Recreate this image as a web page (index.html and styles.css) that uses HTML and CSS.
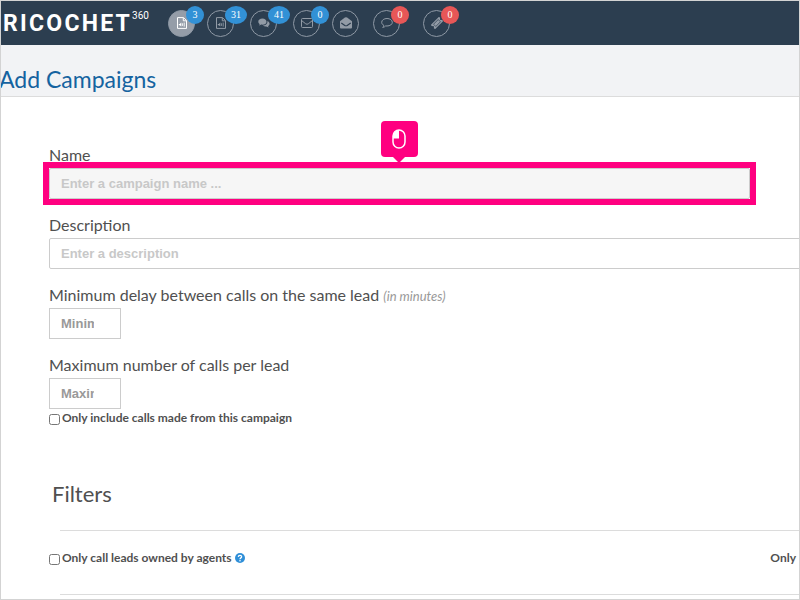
FILE: index.html
```html
<!DOCTYPE html>
<html lang="en">
<head>
  <meta charset="UTF-8" />
  <meta name="viewport" content="width=device-width, initial-scale=1.0" />
  <title>Add Campaigns</title>
  <link rel="stylesheet" href="styles.css">
</head>
<body>
  <div class="page">
    <header class="topbar">
      <div class="logo">
        <span>R</span><span>I</span><span>C</span><span>O</span><span>C</span><span>H</span><span>E</span><span>T</span><sup>360</sup>
      </div>
      <nav class="notifications">
        <button type="button" class="notice" aria-label="Voicemails">
          <span class="circle active">
            <svg width="12" height="12" viewBox="0 0 12 12" fill="none" stroke="currentColor"><path d="M1.5 .6h6l3 3v7.8h-9zM7.3.8v3h3"/><path d="M2.8 7.1h1L5.3 5.6v4L3.8 8.3h-1z" fill="currentColor" stroke="none"/><path d="M6.4 6.3v2.6M8.2 5.6v4" stroke-width=".9"/></svg>
          </span>
          <span class="badge">3</span>
        </button>
        <button type="button" class="notice" aria-label="Recordings">
          <span class="circle">
            <svg width="12" height="12" viewBox="0 0 12 12" fill="none" stroke="currentColor"><path d="M1.5 .6h6l3 3v7.8h-9zM7.3.8v3h3"/><path d="M2.8 7.1h1L5.3 5.6v4L3.8 8.3h-1z" fill="currentColor" stroke="none"/><path d="M6.4 6.3v2.6M8.2 5.6v4" stroke-width=".9"/></svg>
          </span>
          <span class="badge">31</span>
        </button>
        <button type="button" class="notice" aria-label="Messages">
          <span class="circle">
            <svg width="12" height="12" viewBox="0 0 12 12" fill="currentColor"><path d="M4.4 1.6C2 1.6.3 2.9.3 4.7c0 1 .6 1.8 1.5 2.4-.2.6-.5.9-.8 1.3.9-.1 1.6-.4 2.2-.8.4.1.8.1 1.2.1 2.4 0 4.1-1.3 4.1-3S6.8 1.6 4.4 1.6z"/><path d="M9.3 4c.8 2.3-1.5 4.5-4.4 4.5.8.8 2 1.2 3.3 1.1.8.5 1.6.8 2.6.8-.4-.4-.7-.8-.8-1.3 2.2-1.2 2.2-4-.7-5.1z"/></svg>
          </span>
          <span class="badge">41</span>
        </button>
        <button type="button" class="notice" aria-label="Emails">
          <span class="circle">
            <svg width="12" height="12" viewBox="0 0 12 12" fill="none" stroke="currentColor"><rect x=".5" y="1.5" width="11" height="9" rx="1"/><path d="M.7 3.6l4 3.2q1.3.9 2.6 0l4-3.2"/></svg>
          </span>
          <span class="badge">0</span>
        </button>
        <button type="button" class="notice" aria-label="Open emails">
          <span class="circle">
            <svg width="12" height="12" viewBox="0 0 12 12"><path d="M0 4.2L4.9.6q1.1-.8 2.2 0L12 4.2V10.5q0 1-1 1H1q-1 0-1-1z" fill="currentColor"/><path d="M1.3 5.9L4.8 8.4q1.2.7 2.4 0l3.5-2.5" fill="none" stroke="#2c3e50" stroke-width="1.2"/></svg>
          </span>
        </button>
        <button type="button" class="notice spaced" aria-label="Chats">
          <span class="circle">
            <svg width="12" height="12" viewBox="0 0 12 12" fill="none" stroke="currentColor"><path d="M6 1.5C3 1.5.7 3.1.7 5.3c0 1.3.8 2.4 2.1 3-.1.9-.5 1.5-1.1 2.1 1.3-.2 2.3-.7 3-1.5.4.1.8.1 1.3.1 3 0 5.3-1.6 5.3-3.7S9 1.5 6 1.5z"/></svg>
          </span>
          <span class="badge red">0</span>
        </button>
        <button type="button" class="notice spaced" aria-label="Tickets">
          <span class="circle">
            <svg width="12" height="12" viewBox="0 0 12 12" fill="currentColor"><g transform="rotate(-45 6 6)"><path d="M.2 3h11.6v1.9a1.1 1.1 0 0 0 0 2.2V9H.2V7.1a1.1 1.1 0 0 0 0-2.2z"/><path d="M2.7 4.4h6.6v3.2H2.7z" fill="none" stroke="#2c3e50" stroke-width=".7"/></g></svg>
          </span>
          <span class="badge red">0</span>
        </button>
      </nav>
    </header>

    <div class="title-bar">
      <h1>Add Campaigns</h1>
    </div>

    <form class="campaign-form">
      <div class="field">
        <label for="name">Name</label>
        <div class="highlight">
          <input type="text" id="name" name="name" placeholder="Enter a campaign name ..." />
          <div class="marker">
            <svg width="14" height="20" viewBox="0 0 14 20"><rect x="1" y="1" width="12" height="18" rx="6" fill="none" stroke="#fff" stroke-width="1.5"/><path d="M7 1v8.5H1V7a6 6 0 0 1 6-6z" fill="#fff"/></svg>
          </div>
        </div>
      </div>

      <div class="field">
        <label for="description">Description</label>
        <input type="text" id="description" class="wide" name="description" placeholder="Enter a description" />
      </div>

      <div class="field">
        <label for="delay">Minimum delay between calls on the same lead <em>(in minutes)</em></label>
        <input type="number" id="delay" class="short" name="delay" placeholder="Minimum" />
      </div>

      <div class="field">
        <label for="maxCalls">Maximum number of calls per lead</label>
        <input type="number" id="maxCalls" class="short" name="maxCalls" placeholder="Maximum" />
      </div>

      <label class="check"><input type="checkbox" name="onlyCampaign" />Only include calls made from this campaign</label>

      <h2>Filters</h2>
      <div class="filter-row">
        <label class="check"><input type="checkbox" name="onlyOwned" />Only call leads owned by agents
          <svg class="help" width="10" height="10" viewBox="0 0 10 10"><circle cx="5" cy="5" r="5" fill="#2f8fd8"/><path d="M3.3 3.9C3.4 1.9 6.7 2 6.6 3.9 6.5 4.9 5 4.9 5 6.2" fill="none" stroke="#fff" stroke-width="1.3"/><circle cx="5" cy="7.7" r=".8" fill="#fff"/></svg>
        </label>
        <span>Only</span>
      </div>
    </form>
  </div>
</body>
</html>
```
FILE: styles.css
```css
* {
  box-sizing: border-box;
}

body {
  margin: 0;
  font-family: Lato, sans-serif;
  color: #505050;
  background: #fff;
}

.page {
  min-height: 100vh;
  border: 1px solid #d3d3d3;
  overflow: hidden;
}

.topbar {
  display: flex;
  align-items: center;
  height: 44px;
  background: #2c3e50;
}

.logo {
  display: flex;
  align-items: center;
  justify-content: space-between;
  width: 146px;
  margin-left: 2px;
  font: bold 23px Roboto, sans-serif;
  color: #fff;
}

.logo sup {
  align-self: flex-start;
  font-size: 10px;
  font-weight: normal;
}

.notifications {
  display: flex;
  gap: 3px;
  margin-left: 19px;
}

.notice {
  display: flex;
  padding: 0;
  border: none;
  background: none;
  cursor: pointer;
}

.notice.spaced {
  margin-left: 11px;
}

.circle {
  display: flex;
  align-items: center;
  justify-content: center;
  width: 27px;
  height: 27px;
  border: 1px solid #8f99a5;
  border-radius: 50%;
  color: #929ba6;
}

.circle.active {
  background: #959da8;
  color: #fff;
}

.badge {
  min-width: 18px;
  height: 18px;
  margin: -4px 0 0 -9px;
  padding: 0 6px;
  border-radius: 50%;
  background: #3291d6;
  font: 10px/18px "Liberation Serif", serif;
  color: #fff;
}

.badge.red {
  background: #e75757;
}

.title-bar {
  height: 52px;
  padding-top: 18px;
  border-bottom: 1px solid #dcdcdc;
  background: #f2f3f5;
}

h1 {
  margin: 0 0 0 -2px;
  font-size: 23px;
  font-weight: normal;
  line-height: 32px;
  color: #1563a0;
}

.campaign-form {
  padding: 47px 0 0 48px;
}

.field {
  height: 70px;
}

.field label {
  display: block;
  margin-bottom: 2px;
  font-size: 16px;
  line-height: 22px;
}

.field em {
  font-size: 13px;
  line-height: 12px;
  color: #999;
}

.field input {
  display: block;
  height: 31px;
  padding: 0 11px;
  border: 1px solid #ccc;
  border-radius: 2px;
  background: #fff;
  font: bold 13px "Liberation Sans", Arial, sans-serif;
}

.field input::placeholder {
  color: #c8c8c8;
  opacity: 1;
}

.highlight {
  position: relative;
  margin-right: 49px;
}

/* pink frame around the active field */
.highlight::after {
  content: "";
  position: absolute;
  inset: -6px;
  border: 6px solid #ff0080;
  pointer-events: none;
}

.field .highlight input {
  width: 100%;
  background: #f6f6f6;
}

.marker {
  position: absolute;
  left: 50%;
  bottom: 42px;
  display: flex;
  align-items: center;
  justify-content: center;
  width: 37px;
  height: 36px;
  margin-left: -19px;
  border-radius: 4px;
  background: #ff0080;
}

.marker::after {
  content: "";
  position: absolute;
  top: 100%;
  border: 6px solid transparent;
  border-top-color: #ff0080;
}

.field input.wide {
  width: calc(100% + 20px);
}

.field input.short {
  width: 72px;
  border-radius: 0;
}

.field input.short::placeholder {
  color: #999;
}

.check {
  display: flex;
  align-items: center;
  font-size: 12px;
  font-weight: bold;
  line-height: 14px;
}

.campaign-form > .check {
  margin-top: -13px;
}

.check input {
  width: 11px;
  height: 11px;
  margin: 2px 2px 0 0;
}

.help {
  margin-left: 3px;
}

h2 {
  margin: 54px 0 21px 3px;
  font-size: 22px;
  font-weight: normal;
  line-height: 30px;
}

.filter-row {
  display: flex;
  align-items: flex-start;
  justify-content: space-between;
  height: 65px;
  padding: 21px 3px 0 0;
  background:
    linear-gradient(#dcdcdc, #dcdcdc) 11px 0 / 100% 1px no-repeat,
    linear-gradient(#dcdcdc, #dcdcdc) 11px 100% / 100% 1px no-repeat;
  font-size: 12px;
  font-weight: bold;
  line-height: 14px;
}
```
